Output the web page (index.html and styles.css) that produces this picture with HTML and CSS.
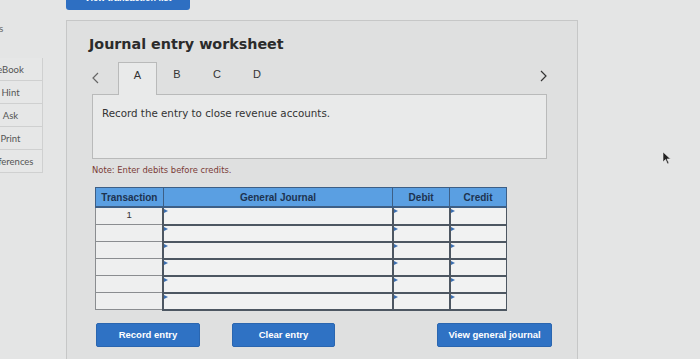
FILE: index.html
```html
<!DOCTYPE html>
<html lang="en">
<head>
  <meta charset="UTF-8">
  <meta name="viewport" content="width=device-width, initial-scale=1.0">
  <title>Journal entry worksheet</title>
  <link rel="stylesheet" href="styles.css">
</head>
<body>

<div class="page">
  <div class="sidebar">
    <div class="side-top">s</div>
    <div class="side-btn">eBook</div>
    <div class="side-btn">Hint</div>
    <div class="side-btn">Ask</div>
    <div class="side-btn">Print</div>
    <div class="side-btn">References</div>
  </div>

  <div class="main">
    <div class="top-btn"><span>View transaction list</span></div>

    <div class="worksheet">
      <h1 class="title">Journal entry worksheet</h1>

      <div class="tabs">
        <span class="arrow">
          <svg width="7" height="12" viewBox="0 0 7 12"><polyline points="6,1 1,6 6,11" fill="none" stroke="#666" stroke-width="1.2"/></svg>
        </span>
        <span class="tab active">A</span>
        <span class="tab">B</span>
        <span class="tab">C</span>
        <span class="tab">D</span>
        <span class="arrow next">
          <svg width="7" height="12" viewBox="0 0 7 12"><polyline points="1,1 6,6 1,11" fill="none" stroke="#333" stroke-width="1.2"/></svg>
        </span>
      </div>

      <div class="prompt">Record the entry to close revenue accounts.</div>

      <p class="note">Note: Enter debits before credits.</p>

      <table class="journal">
        <colgroup>
          <col class="col-trans">
          <col class="col-gj">
          <col class="col-num">
          <col class="col-num">
        </colgroup>
        <thead>
          <tr>
            <th>Transaction</th>
            <th>General Journal</th>
            <th>Debit</th>
            <th>Credit</th>
          </tr>
        </thead>
        <tbody>
          <tr><td class="trans">1</td><td class="cell"></td><td class="cell"></td><td class="cell"></td></tr>
          <tr><td class="trans"></td><td class="cell"></td><td class="cell"></td><td class="cell"></td></tr>
          <tr><td class="trans"></td><td class="cell"></td><td class="cell"></td><td class="cell"></td></tr>
          <tr><td class="trans"></td><td class="cell"></td><td class="cell"></td><td class="cell"></td></tr>
          <tr><td class="trans"></td><td class="cell"></td><td class="cell"></td><td class="cell"></td></tr>
          <tr><td class="trans"></td><td class="cell"></td><td class="cell"></td><td class="cell"></td></tr>
        </tbody>
      </table>

      <div class="actions">
        <button class="btn btn-record">Record entry</button>
        <button class="btn btn-clear">Clear entry</button>
        <button class="btn btn-view">View general journal</button>
      </div>
    </div>
  </div>
</div>

<svg class="cursor" width="10" height="14" viewBox="0 0 10 14">
  <path d="M1 1 L1 11 L3.5 8.5 L5.5 13 L7 12.3 L5 8 L8.5 8 Z" fill="#222" stroke="#eee" stroke-width="0.6"/>
</svg>

</body>
</html>
```

FILE: styles.css
```css
body {
  margin: 0;
  background: #e4e5e5;
  font-family: "DejaVu Sans", Verdana, sans-serif;
  color: #333;
  height: 359px;
  overflow: hidden;
}

.page {
  display: flex;
  height: 359px;
}

.sidebar {
  width: 44px;
  flex-shrink: 0;
  overflow: hidden;
  padding-top: 22px;
  font-family: "Lato", "Liberation Sans", sans-serif;
}

.side-top {
  font-size: 10px;
  color: #666;
  margin-left: -1px;
  height: 36px;
}

.side-btn {
  width: 65px;
  margin-left: -22px;
  height: 23px;
  line-height: 23px;
  text-align: center;
  font-size: 9.5px;
  color: #555;
  background: #e6e7e7;
  border: 1px solid #cfd0d0;
  border-top: none;
  box-sizing: border-box;
}

.side-btn:first-of-type {
  border-top: 1px solid #cfd0d0;
}

.main {
  margin-left: 22px;
  width: 512px;
}

.top-btn {
  width: 124px;
  height: 10px;
  background: #2e6fc2;
  border-radius: 0 0 3px 3px;
  color: #fff;
  font-size: 9px;
  line-height: 0;
  overflow: hidden;
  text-align: center;
  font-weight: bold;
  font-family: "Liberation Sans", Arial, sans-serif;
}

.top-btn span {
  display: block;
  margin-top: -2px;
}

.worksheet {
  margin-top: 10px;
  height: 340px;
  background: #dfe0e0;
  border: 1px solid #c6c7c7;
  border-bottom: none;
  box-sizing: border-box;
  padding: 0 25px 0 25px;
}

.title {
  margin: 15px 0 0 -3px;
  font-size: 14.3px;
  font-weight: bold;
  color: #2b2b2b;
}

.tabs {
  display: flex;
  align-items: flex-end;
  height: 32px;
  margin-top: 10px;
  position: relative;
  font-family: "Liberation Sans", Arial, sans-serif;
  font-size: 11px;
  color: #333;
}

.arrow {
  width: 26px;
  align-self: center;
  display: flex;
}

.arrow.next {
  position: absolute;
  right: 5px;
  top: 8px;
  width: auto;
}

.tab {
  width: 40px;
  height: 32px;
  line-height: 24px;
  text-align: center;
  box-sizing: border-box;
}

.tab.active {
  width: 39px;
  background: #e9eaea;
  border: 1px solid #b9baba;
  border-bottom: none;
  margin-bottom: -1px;
  height: 33px;
}

.prompt {
  width: 455px;
  height: 65px;
  box-sizing: border-box;
  background: #e9eaea;
  border: 1px solid #b9baba;
  padding: 12px 9px;
  font-size: 10.3px;
  color: #333;
}

.note {
  margin: 6px 0 0 0;
  font-size: 8.4px;
  color: #7a3b36;
}

.journal {
  margin: 12px 0 0 3px;
  width: 412px;
  table-layout: fixed;
  border-collapse: collapse;
  font-family: "Liberation Sans", Arial, sans-serif;
  border: 1px solid #555f6a;
}

.col-trans { width: 16.5%; }
.col-gj { width: 55.8%; }
.col-num { width: 13.85%; }

.journal th {
  height: 18px;
  padding: 0;
  background: #5a9fe2;
  color: #1d3350;
  font-size: 10px;
  font-weight: bold;
  border: 1px solid #3d5f86;
  border-bottom: 2px solid #3d5f86;
}

.journal td {
  height: 15px;
  padding: 0;
  background: #eeefef;
}

.journal td.trans {
  text-align: center;
  font-size: 9.5px;
  color: #333;
  border: 1px solid #8a8d90;
  vertical-align: top;
  padding-top: 1px;
}

.journal td.cell {
  position: relative;
  background: #f1f2f2;
  border-left: 2px solid #4d5762;
  border-right: 1px solid #4d5762;
  border-bottom: 2px solid #4d5762;
}

.journal td.cell::before {
  content: "";
  position: absolute;
  left: 0;
  top: 1px;
  border-left: 4px solid #3c6fb0;
  border-top: 2.5px solid transparent;
  border-bottom: 2.5px solid transparent;
}

.actions {
  display: flex;
  margin: 12px 0 0 4px;
}

.btn {
  height: 24px;
  background: #2f72c4;
  color: #fff;
  border: 1px solid #2a66b0;
  border-radius: 2px;
  font-family: "Liberation Sans", Arial, sans-serif;
  font-weight: bold;
  font-size: 9.5px;
  padding: 0;
}

.btn-record { width: 104px; }
.btn-clear { width: 103px; margin-left: 32px; }
.btn-view { width: 115px; margin-left: 102px; }

.cursor {
  position: absolute;
  left: 662px;
  top: 151px;
}
```
